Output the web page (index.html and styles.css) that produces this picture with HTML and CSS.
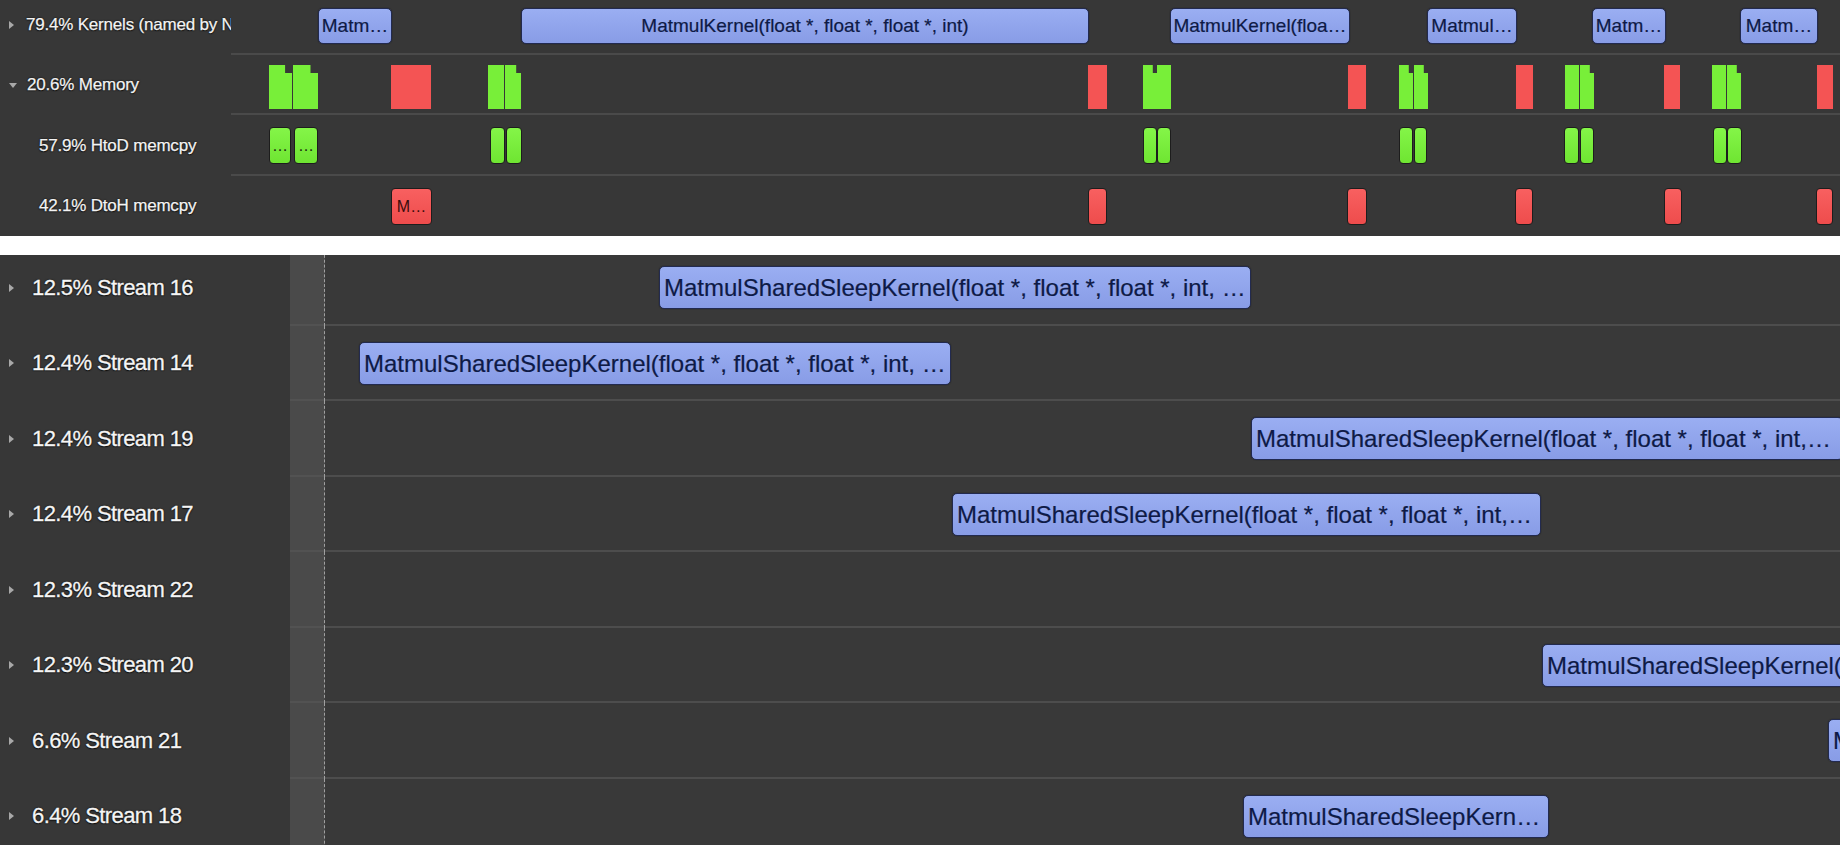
FILE: index.html
```html
<!DOCTYPE html>
<html>
<head>
<meta charset="utf-8">
<link rel="stylesheet" href="styles.css">
</head>
<body>
<div class="panel top">
  <div class="rows">
    <div class="trow">
      <div class="tlabel"><span class="tri right"></span><span>79.4% Kernels (named by NVTX)</span></div>
      <div class="ttrack">
        <div class="bar kbar" style="left:87px;width:74px">Matm…</div>
        <div class="bar kbar" style="left:290px;width:568px">MatmulKernel(float *, float *, float *, int)</div>
        <div class="bar kbar" style="left:939px;width:180px">MatmulKernel(floa…</div>
        <div class="bar kbar" style="left:1196px;width:90px">Matmul…</div>
        <div class="bar kbar" style="left:1361px;width:74px">Matm…</div>
        <div class="bar kbar" style="left:1509px;width:78px">Matm…</div>
      </div>
    </div>
    <div class="trow">
      <div class="tlabel"><span class="tri down"></span><span>20.6% Memory</span></div>
      <div class="ttrack">
        <div class="mem g notch-r" style="left:38px;width:23px"></div>
        <div class="mem g notch-r" style="left:62px;width:25px"></div>
        <div class="mem r notch-l" style="left:160px;width:40px"></div>
        <div class="mem g notch-l" style="left:257px;width:16px"></div>
        <div class="mem g notch-r" style="left:274px;width:16px"></div>
        <div class="mem r notch-l" style="left:857px;width:19px"></div>
        <div class="mem g notch-r" style="left:912px;width:14px"></div>
        <div class="mem g notch-l" style="left:926px;width:14px"></div>
        <div class="mem r notch-l" style="left:1117px;width:18px"></div>
        <div class="mem g notch-r" style="left:1168px;width:14px"></div>
        <div class="mem g notch-r" style="left:1183px;width:14px"></div>
        <div class="mem r notch-l" style="left:1285px;width:17px"></div>
        <div class="mem g notch-l" style="left:1334px;width:14px"></div>
        <div class="mem g notch-r" style="left:1349px;width:14px"></div>
        <div class="mem r notch-l" style="left:1433px;width:16px"></div>
        <div class="mem g notch-l" style="left:1481px;width:14px"></div>
        <div class="mem g notch-r" style="left:1496px;width:14px"></div>
        <div class="mem r notch-l" style="left:1586px;width:16px"></div>
      </div>
    </div>
    <div class="trow tall">
      <div class="tlabel sub"><span>57.9% HtoD memcpy</span></div>
      <div class="ttrack">
        <div class="cp g" style="left:38px;width:22px">…</div>
        <div class="cp g" style="left:63px;width:24px">…</div>
        <div class="cp g" style="left:259px;width:15px"></div>
        <div class="cp g" style="left:275px;width:16px"></div>
        <div class="cp g" style="left:912px;width:14px"></div>
        <div class="cp g" style="left:926px;width:14px"></div>
        <div class="cp g" style="left:1168px;width:14px"></div>
        <div class="cp g" style="left:1183px;width:13px"></div>
        <div class="cp g" style="left:1333px;width:15px"></div>
        <div class="cp g" style="left:1349px;width:14px"></div>
        <div class="cp g" style="left:1482px;width:14px"></div>
        <div class="cp g" style="left:1496px;width:15px"></div>
      </div>
    </div>
    <div class="trow">
      <div class="tlabel sub"><span>42.1% DtoH memcpy</span></div>
      <div class="ttrack last">
        <div class="cp r" style="left:160px;width:41px">M…</div>
        <div class="cp r" style="left:857px;width:19px"></div>
        <div class="cp r" style="left:1116px;width:20px"></div>
        <div class="cp r" style="left:1284px;width:18px"></div>
        <div class="cp r" style="left:1433px;width:18px"></div>
        <div class="cp r" style="left:1585px;width:17px"></div>
      </div>
    </div>
  </div>
</div>
<div class="sep"></div>
<div class="panel bottom">
  <div class="rows">
    <div class="brow">
      <div class="blabel"><span class="tri right"></span><span>12.5% Stream 16</span></div>
      <div class="strip"></div>
      <div class="btrack">
        <div class="bar bbar" style="left:334px;width:592px">MatmulSharedSleepKernel(float *, float *, float *, int, …</div>
      </div>
    </div>
    <div class="brow">
      <div class="blabel"><span class="tri right"></span><span>12.4% Stream 14</span></div>
      <div class="strip"></div>
      <div class="btrack">
        <div class="bar bbar" style="left:34px;width:592px">MatmulSharedSleepKernel(float *, float *, float *, int, …</div>
      </div>
    </div>
    <div class="brow">
      <div class="blabel"><span class="tri right"></span><span>12.4% Stream 19</span></div>
      <div class="strip"></div>
      <div class="btrack">
        <div class="bar bbar" style="left:926px;width:592px">MatmulSharedSleepKernel(float *, float *, float *, int,…</div>
      </div>
    </div>
    <div class="brow">
      <div class="blabel"><span class="tri right"></span><span>12.4% Stream 17</span></div>
      <div class="strip"></div>
      <div class="btrack">
        <div class="bar bbar" style="left:627px;width:589px">MatmulSharedSleepKernel(float *, float *, float *, int,…</div>
      </div>
    </div>
    <div class="brow">
      <div class="blabel"><span class="tri right"></span><span>12.3% Stream 22</span></div>
      <div class="strip"></div>
      <div class="btrack"></div>
    </div>
    <div class="brow">
      <div class="blabel"><span class="tri right"></span><span>12.3% Stream 20</span></div>
      <div class="strip"></div>
      <div class="btrack">
        <div class="bar bbar" style="left:1217px;width:592px">MatmulSharedSleepKernel(float *, float *, float *, int, …</div>
      </div>
    </div>
    <div class="brow">
      <div class="blabel"><span class="tri right"></span><span>6.6% Stream 21</span></div>
      <div class="strip"></div>
      <div class="btrack">
        <div class="bar bbar" style="left:1503px;width:300px">MatmulSharedSleepKernel…</div>
      </div>
    </div>
    <div class="brow">
      <div class="blabel"><span class="tri right"></span><span>6.4% Stream 18</span></div>
      <div class="strip"></div>
      <div class="btrack">
        <div class="bar bbar" style="left:918px;width:306px">MatmulSharedSleepKern…</div>
      </div>
    </div>
  </div>
</div>
</body>
</html>
```
FILE: styles.css
```css
html, body {
  margin: 0;
  padding: 0;
}
body {
  width: 1840px;
  height: 845px;
  overflow: hidden;
  background: #ffffff;
  font-family: "Liberation Sans", Arial, sans-serif;
}
.panel {
  overflow: hidden;
}
.top {
  height: 236px;
  background: #373737;
}
.top .rows {
  margin-top: -5px;
}
.trow {
  display: flex;
  height: 60px;
}
.trow.tall {
  height: 61px;
}
.tlabel {
  width: 231px;
  flex: none;
  box-sizing: border-box;
  padding-left: 9px;
  display: flex;
  align-items: center;
  gap: 12px;
  color: #f3f3f3;
  font-size: 17px;
  letter-spacing: -0.2px;
  white-space: nowrap;
  overflow: hidden;
  -webkit-text-stroke: 0.25px #f3f3f3;
  text-shadow: 0 0 2px #000, 0 1px 1px #111;
}
.tlabel.sub {
  padding-left: 39px;
}
.tri {
  flex: none;
  width: 0;
  height: 0;
}
.tri.right {
  border-left: 5px solid #a8a8a8;
  border-top: 4px solid transparent;
  border-bottom: 4px solid transparent;
}
.tri.down {
  border-top: 5px solid #a8a8a8;
  border-left: 4px solid transparent;
  border-right: 4px solid transparent;
  margin-right: -2px;
}
.ttrack {
  flex: 1;
  position: relative;
  box-sizing: border-box;
  border-bottom: 2px solid #4a4a4a;
}
.ttrack.last {
  border-bottom: none;
}
.bar {
  position: absolute;
  box-sizing: border-box;
  border: 1px solid #222a50;
  border-radius: 5px;
  background: linear-gradient(#9aaef2, #889ce6);
  color: #0e1a46;
  white-space: nowrap;
  overflow: hidden;
  -webkit-text-stroke: 0.2px #0e1a46;
  box-shadow: 0 0 1px #111;
}
.kbar {
  top: 13px;
  height: 36px;
  font-size: 19px;
  line-height: 34px;
  text-align: center;
}
.bbar {
  top: 16px;
  height: 43px;
  font-size: 24px;
  line-height: 41px;
  padding-left: 4px;
}
.mem {
  position: absolute;
  top: 10px;
  height: 44px;
}
.mem.g {
  background: #78ef39;
}
.mem.r {
  background: #f45454;
}
.notch-r {
  clip-path: polygon(0 0, 70% 0, 70% 18%, 100% 18%, 100% 92%, 100% 100%, 0 100%);
}
.notch-l {
  clip-path: polygon(0 0, 100% 0, 100% 100%, 0 100%, 0 60%, 0 60%);
}
.cp {
  position: absolute;
  top: 12px;
  height: 37px;
  box-sizing: border-box;
  border-radius: 4px;
  border: 1px solid #1d1d1d;
  font-size: 16px;
  line-height: 35px;
  text-align: center;
  color: #1b2a10;
  overflow: hidden;
  white-space: nowrap;
}
.cp.g {
  background: linear-gradient(#84f548, #6fe532);
}
.cp.r {
  background: linear-gradient(#f86060, #ee4c4c);
  color: #3a0c0c;
}
.sep {
  height: 19px;
  background: #ffffff;
}
.bottom {
  height: 590px;
  background: #373737;
}
.bottom .rows {
  margin-top: -5px;
}
.brow {
  display: flex;
  height: 75.5px;
}
.blabel {
  width: 290px;
  flex: none;
  box-sizing: border-box;
  padding-left: 9px;
  display: flex;
  align-items: center;
  gap: 18px;
  color: #f5f5f5;
  font-size: 22px;
  letter-spacing: -0.6px;
  white-space: nowrap;
  overflow: hidden;
  -webkit-text-stroke: 0.3px #f5f5f5;
  text-shadow: 0 0 2px #000, 0 1px 1px #111;
}
.strip {
  width: 35px;
  flex: none;
  box-sizing: border-box;
  background: #4a4a4a;
  border-right: 1px dashed #a0a0a0;
  box-shadow: inset 0 -2px 0 #525252;
}
.btrack {
  flex: 1;
  position: relative;
  box-sizing: border-box;
  background: #393939;
  border-bottom: 2px solid #4d4d4d;
}
```
